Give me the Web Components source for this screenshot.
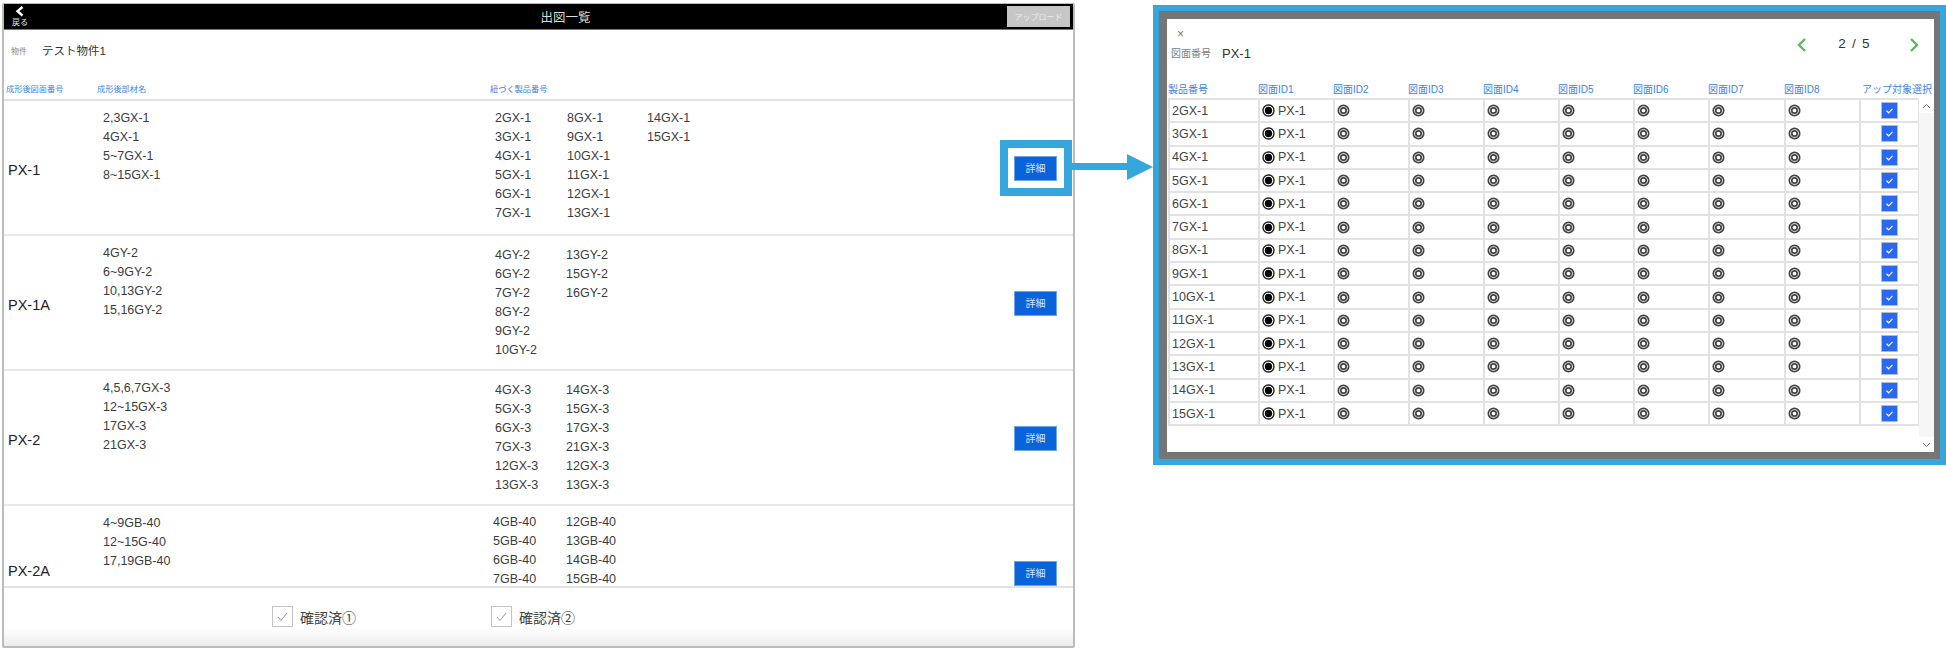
<!DOCTYPE html>
<html lang="ja">
<head>
<meta charset="utf-8">
<title>出図一覧</title>
<style>
    body {
        margin: 0;
        background: #ffffff;
        position: relative;
        width: 1946px;
        height: 652px;
        overflow: hidden;
        display: flex;
        align-items: flex-start;
        font-family: "Liberation Sans", "Noto Sans CJK JP", sans-serif;
    }
</style>
</head>
<body>
<drawing-list-screen title="出図一覧" property-name="テスト物件1">
    <drawing-row name="PX-1" highlight products-top="7.5" col-widths="[72,80,60]"
        materials='["2,3GX-1","4GX-1","5~7GX-1","8~15GX-1"]'
        products='[["2GX-1","3GX-1","4GX-1","5GX-1","6GX-1","7GX-1"],["8GX-1","9GX-1","10GX-1","11GX-1","12GX-1","13GX-1"],["14GX-1","15GX-1"]]'></drawing-row>
    <drawing-row name="PX-1A" products-top="9.5"
        materials='["4GY-2","6~9GY-2","10,13GY-2","15,16GY-2"]'
        products='[["4GY-2","6GY-2","7GY-2","8GY-2","9GY-2","10GY-2"],["13GY-2","15GY-2","16GY-2"]]'></drawing-row>
    <drawing-row name="PX-2" products-top="10"
        materials='["4,5,6,7GX-3","12~15GX-3","17GX-3","21GX-3"]'
        products='[["4GX-3","5GX-3","6GX-3","7GX-3","12GX-3","13GX-3"],["14GX-3","15GX-3","17GX-3","21GX-3","12GX-3","13GX-3"]]'></drawing-row>
    <drawing-row name="PX-2A" name-top="-2" products-top="6.5" products-left="2" col-widths="[73,74]"
        materials='["4~9GB-40","12~15G-40","17,19GB-40"]'
        products='[["4GB-40","5GB-40","6GB-40","7GB-40"],["12GB-40","13GB-40","14GB-40","15GB-40"]]'></drawing-row>
</drawing-list-screen>
<callout-arrow></callout-arrow>
<drawing-detail-panel drawing="PX-1" page="2 / 5"
    rows='["2GX-1","3GX-1","4GX-1","5GX-1","6GX-1","7GX-1","8GX-1","9GX-1","10GX-1","11GX-1","12GX-1","13GX-1","14GX-1","15GX-1"]'></drawing-detail-panel>

<script>
class DrawingListScreen extends HTMLElement {
    constructor() {
        super();
        this.attachShadow({ mode: "open" });
    }

    connectedCallback() {
        this.shadowRoot.innerHTML = `
            <style>
                :host {
                    display: flex;
                    flex-direction: column;
                    box-sizing: border-box;
                    flex: none;
                    width: 1073px;
                    height: 645px;
                    margin: 3px 0 0 2px;
                    border: 2px solid #bcbcbc;
                    border-top-width: 1px;
                    border-radius: 2px;
                    background: #ffffff;
                    color: #333333;
                }
                .bar {
                    flex: none;
                    display: grid;
                    grid-template-columns: 1fr auto 1fr;
                    align-items: center;
                    height: 26px;
                    background: #000000;
                    border-bottom: 1px solid #777777;
                    box-sizing: border-box;
                }
                .back {
                    display: flex;
                    flex-direction: column;
                    align-items: center;
                    width: 32px;
                    color: #e8e8e8;
                    font-size: 8px;
                    line-height: 9px;
                }
                .back svg {
                    display: block;
                    margin-bottom: 1px;
                }
                .title {
                    margin-left: 54px;
                    color: #dddddd;
                    font-size: 12.5px;
                }
                .upload {
                    justify-self: end;
                    width: 63px;
                    height: 21px;
                    margin-right: 3px;
                    display: flex;
                    align-items: center;
                    justify-content: center;
                    background: #c6c6c6;
                    color: #ececec;
                    font-size: 8px;
                    box-sizing: border-box;
                }
                .property {
                    flex: none;
                    display: flex;
                    align-items: center;
                    height: 40px;
                    padding-left: 7px;
                }
                .property small {
                    width: 31px;
                    font-size: 8px;
                    color: #888888;
                }
                .property span {
                    font-size: 11.5px;
                    color: #333333;
                }
                .heads {
                    flex: none;
                    display: grid;
                    grid-template-columns: 91px 393px 1fr;
                    align-items: center;
                    height: 33px;
                    padding: 8px 0 0 2px;
                    margin-top: -2px;
                    box-sizing: border-box;
                    border-bottom: 2px solid #e2e2e2;
                    font-size: 8.2px;
                    color: #3b84e4;
                }
                .list {
                    flex: 1;
                    min-height: 0;
                    overflow: hidden;
                }
                .confirm {
                    flex: none;
                    height: 60px;
                    box-sizing: border-box;
                    border-top: 2px solid #e2e2e2;
                    display: flex;
                    padding: 18px 0 0 268px;
                    gap: 135px;
                    background: linear-gradient(#ffffff 68%, #ececec);
                }
                .check {
                    display: flex;
                    align-items: center;
                    gap: 7px;
                    height: 21px;
                    font-size: 14px;
                    color: #444444;
                }
                .check svg {
                    display: block;
                }
            </style>
            <div class="bar">
                <div class="back">
                    <svg width="10" height="11" viewBox="0 0 10 11"><polyline points="7.5,1 2.5,5.2 7.5,9.5" fill="none" stroke="#ffffff" stroke-width="2.4"/></svg>
                    戻る
                </div>
                <div class="title">${this.getAttribute("title") || ""}</div>
                <div class="upload">アップロード</div>
            </div>
            <div class="property">
                <small>物件</small>
                <span>${this.getAttribute("property-name") || ""}</span>
            </div>
            <div class="heads">
                <span>成形後図面番号</span>
                <span>成形後部材名</span>
                <span>紐づく製品番号</span>
            </div>
            <div class="list"><slot></slot></div>
            <div class="confirm">
                ${["確認済①", "確認済②"]
                    .map(
                        (label) => `
                    <div class="check">
                        <svg width="21" height="21" viewBox="0 0 21 21">
                            <rect x="0.5" y="0.5" width="20" height="20" fill="#ffffff" stroke="#c4c4c4"/>
                            <polyline points="6,11 9,14.5 15,7" fill="none" stroke="#9a9a9a" stroke-width="1"/>
                        </svg>
                        <span>${label}</span>
                    </div>
                `
                    )
                    .join("")}
            </div>
        `;
    }
}

class DrawingRow extends HTMLElement {
    constructor() {
        super();
        this.attachShadow({ mode: "open" });
    }

    connectedCallback() {
        const materials = JSON.parse(this.getAttribute("materials") || "[]");
        const products = JSON.parse(this.getAttribute("products") || "[]");
        const widths = JSON.parse(this.getAttribute("col-widths") || "[71,71]");
        const top = this.getAttribute("products-top") || "8";
        const left = this.getAttribute("products-left") || "4";
        const nameTop = this.getAttribute("name-top") || "6";

        this.shadowRoot.innerHTML = `
            <style>
                :host {
                    display: grid;
                    grid-template-columns: 99px 388px 1fr 60px;
                    box-sizing: border-box;
                    height: 135px;
                    border-bottom: 2px solid #e8e8e8;
                    font-size: 12.5px;
                    line-height: 19px;
                    color: #3c3c3c;
                }
                .name {
                    align-self: center;
                    margin-top: ${nameTop}px;
                    padding-left: 4px;
                    font-size: 14.5px;
                    color: #222222;
                }
                .materials {
                    padding-top: 7.5px;
                }
                .products {
                    display: flex;
                    padding-top: ${top}px;
                    padding-left: ${left}px;
                }
                .action {
                    align-self: start;
                    padding: 55px 0 0 1px;
                }
                button {
                    position: relative;
                    display: block;
                    width: 43px;
                    height: 25px;
                    padding: 0;
                    border: 1px solid #6ea4ea;
                    background: #0a63d8;
                    color: #d5e4fa;
                    font: inherit;
                    font-size: 10px;
                }
                :host([highlight]) button::after {
                    content: "";
                    position: absolute;
                    left: -15px;
                    top: -17px;
                    width: 56px;
                    height: 40px;
                    border: 8px solid #35a7dc;
                }
            </style>
            <div class="name">${this.getAttribute("name") || ""}</div>
            <div class="materials">
                ${materials.map((item) => `<div>${item}</div>`).join("")}
            </div>
            <div class="products">
                ${products
                    .map(
                        (col, i) => `
                    <div style="width:${widths[i] || 71}px">
                        ${col.map((item) => `<div>${item}</div>`).join("")}
                    </div>
                `
                    )
                    .join("")}
            </div>
            <div class="action"><button>詳細</button></div>
        `;
    }
}

class CalloutArrow extends HTMLElement {
    constructor() {
        super();
        this.attachShadow({ mode: "open" });
    }

    connectedCallback() {
        this.shadowRoot.innerHTML = `
            <style>
                :host {
                    position: absolute;
                    left: 1072px;
                    top: 154px;
                    width: 81px;
                    height: 26px;
                }
                svg {
                    display: block;
                }
            </style>
            <svg width="81" height="26" viewBox="0 0 81 26">
                <rect x="0" y="9" width="56" height="7" fill="#35a7dc"/>
                <polygon points="55,0 81,13 55,26" fill="#35a7dc"/>
            </svg>
        `;
    }
}

class DetailRow extends HTMLElement {
    constructor() {
        super();
        this.attachShadow({ mode: "open" });
    }

    connectedCallback() {
        const radios = [];
        for (let i = 0; i < 7; i++) {
            radios.push(`
                <div class="cell">
                    <svg width="13" height="13" viewBox="0 0 13 13">
                        <circle cx="6.5" cy="6.5" r="5.2" fill="#ffffff" stroke="#444444" stroke-width="1.7"/>
                        <circle cx="6.5" cy="6.5" r="2.7" fill="#ffffff" stroke="#444444" stroke-width="1.7"/>
                    </svg>
                </div>
            `);
        }

        this.shadowRoot.innerHTML = `
            <style>
                :host {
                    display: grid;
                    grid-template-columns: 90px repeat(6, 75px) 76px 75px 59px;
                    box-sizing: border-box;
                    height: 23.3px;
                    border-bottom: 2px solid #e2e2e2;
                    font-size: 12.5px;
                    color: #444444;
                }
                .cell {
                    display: flex;
                    align-items: center;
                    gap: 3px;
                    box-sizing: border-box;
                    padding-left: 2px;
                    border-left: 2px solid #e2e2e2;
                    min-width: 0;
                }
                .cell:first-child {
                    padding-left: 3px;
                }
                .cell:last-child {
                    border-right: 2px solid #e2e2e2;
                    justify-content: center;
                    padding-left: 0;
                    margin-right: -2px;
                }
                svg {
                    display: block;
                    flex: none;
                }
            </style>
            <div class="cell"><slot></slot></div>
            <div class="cell">
                <svg width="13" height="13" viewBox="0 0 13 13">
                    <circle cx="6.5" cy="6.5" r="5.5" fill="#ffffff" stroke="#222222" stroke-width="1.4"/>
                    <circle cx="6.5" cy="6.5" r="3.7" fill="#000000"/>
                </svg>
                <span>${this.getAttribute("drawing") || ""}</span>
            </div>
            ${radios.join("")}
            <div class="cell">
                <svg width="17" height="17" viewBox="0 0 17 17">
                    <rect x="0.5" y="0.5" width="16" height="16" fill="#2a68f2" stroke="#b4bccc"/>
                    <polyline points="5.5,8.8 7.6,10.8 11.5,6.8" fill="none" stroke="#ffffff" stroke-width="1.2"/>
                </svg>
            </div>
        `;
    }
}

class DrawingDetailPanel extends HTMLElement {
    constructor() {
        super();
        this.attachShadow({ mode: "open" });
    }

    connectedCallback() {
        const rows = JSON.parse(this.getAttribute("rows") || "[]");
        const drawing = this.getAttribute("drawing") || "";
        const heads = [];
        for (let i = 1; i <= 8; i++) {
            heads.push(`<span>図面ID${i}</span>`);
        }

        this.shadowRoot.innerHTML = `
            <style>
                :host {
                    display: block;
                    box-sizing: border-box;
                    flex: none;
                    width: 793px;
                    height: 460px;
                    margin: 5px 0 0 78px;
                    border: 6px solid #35a7dc;
                    background: #757575;
                    padding: 8px 6px 7px 8px;
                }
                .sheet {
                    display: flex;
                    flex-direction: column;
                    height: 100%;
                    background: #ffffff;
                    color: #333333;
                }
                .head {
                    flex: none;
                    display: flex;
                    justify-content: space-between;
                    height: 60px;
                    box-sizing: border-box;
                    padding: 8px 15px 0 4px;
                }
                .close {
                    font-size: 12px;
                    line-height: 14px;
                    color: #777777;
                    padding-left: 6px;
                }
                .drawing {
                    display: flex;
                    align-items: center;
                    gap: 11px;
                    margin-top: 4px;
                    line-height: 18px;
                }
                .drawing small {
                    font-size: 10px;
                    color: #808080;
                }
                .drawing span {
                    font-size: 13px;
                    color: #333333;
                }
                .pager {
                    display: flex;
                    align-items: center;
                    height: 33px;
                    margin-top: 1px;
                }
                .pager span {
                    width: 102px;
                    padding-right: 7px;
                    box-sizing: border-box;
                    text-align: center;
                    font-size: 13.5px;
                    letter-spacing: 1.2px;
                    color: #333333;
                    position: relative;
                    top: -1px;
                }
                .pager svg {
                    display: block;
                }
                .cols {
                    flex: none;
                    display: grid;
                    grid-template-columns: 90px repeat(6, 75px) 76px 75px auto;
                    align-items: center;
                    height: 19px;
                    padding-left: 1px;
                    box-sizing: border-box;
                    font-size: 10px;
                    color: #3b84e4;
                    white-space: nowrap;
                }
                .cols span:last-child {
                    padding-left: 3px;
                }
                .body {
                    flex: 1;
                    min-height: 0;
                    display: flex;
                }
                .table {
                    flex: none;
                    width: 751px;
                    margin-left: 1px;
                    border-top: 2px solid #e2e2e2;
                    box-sizing: border-box;
                    height: 100%;
                }
                .scroll {
                    flex: 1;
                    display: flex;
                    flex-direction: column;
                    background: #f6f6f6;
                }
                .scroll div {
                    flex: none;
                    display: flex;
                    align-items: center;
                    justify-content: center;
                    height: 15px;
                    background: #ffffff;
                }
                .scroll i {
                    flex: 1;
                }
                .scroll svg {
                    display: block;
                }
            </style>
            <div class="sheet">
                <div class="head">
                    <div>
                        <div class="close">×</div>
                        <div class="drawing">
                            <small>図面番号</small>
                            <span>${drawing}</span>
                        </div>
                    </div>
                    <div class="pager">
                        <svg width="10" height="14" viewBox="0 0 10 14"><polyline points="8,1 2,7 8,13" fill="none" stroke="#5cb85c" stroke-width="2.4"/></svg>
                        <span>${this.getAttribute("page") || ""}</span>
                        <svg width="10" height="14" viewBox="0 0 10 14"><polyline points="2,1 8,7 2,13" fill="none" stroke="#5cb85c" stroke-width="2.4"/></svg>
                    </div>
                </div>
                <div class="cols">
                    <span>製品番号</span>
                    ${heads.join("")}
                    <span>アップ対象選択</span>
                </div>
                <div class="body">
                    <div class="table">
                        ${rows
                            .map(
                                (row) =>
                                    `<detail-row drawing="${drawing}">${row}</detail-row>`
                            )
                            .join("")}
                    </div>
                    <div class="scroll">
                        <div><svg width="9" height="6" viewBox="0 0 9 6"><polyline points="1,5 4.5,1.5 8,5" fill="none" stroke="#777777"/></svg></div>
                        <i></i>
                        <div><svg width="9" height="6" viewBox="0 0 9 6"><polyline points="1,1 4.5,4.5 8,1" fill="none" stroke="#777777"/></svg></div>
                    </div>
                </div>
            </div>
        `;
    }
}

customElements.define("drawing-list-screen", DrawingListScreen);
customElements.define("drawing-row", DrawingRow);
customElements.define("callout-arrow", CalloutArrow);
customElements.define("detail-row", DetailRow);
customElements.define("drawing-detail-panel", DrawingDetailPanel);
</script>
</body>
</html>
